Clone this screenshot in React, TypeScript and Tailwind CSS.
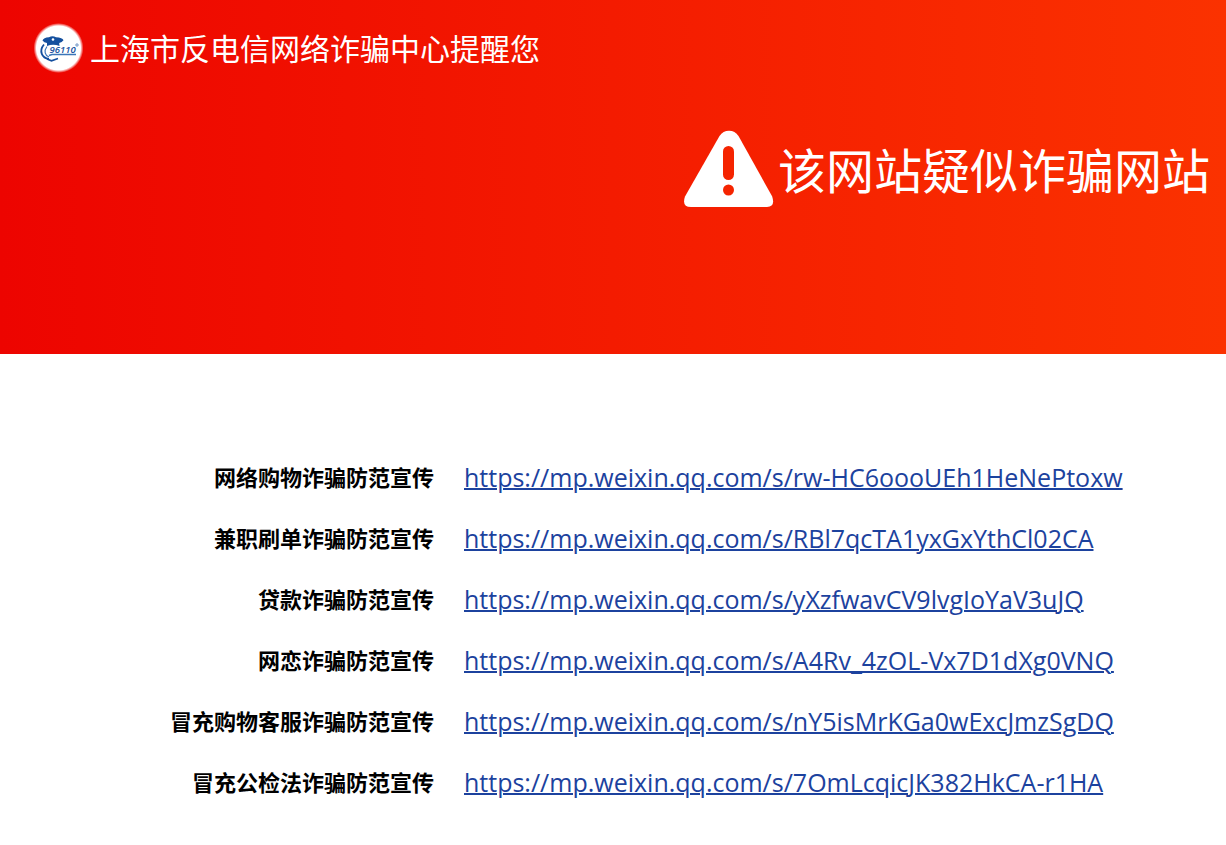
const links = [
  { label: "网络购物诈骗防范宣传", url: "https://mp.weixin.qq.com/s/rw-HC6oooUEh1HeNePtoxw" },
  { label: "兼职刷单诈骗防范宣传", url: "https://mp.weixin.qq.com/s/RBl7qcTA1yxGxYthCl02CA" },
  { label: "贷款诈骗防范宣传", url: "https://mp.weixin.qq.com/s/yXzfwavCV9lvgIoYaV3uJQ" },
  { label: "网恋诈骗防范宣传", url: "https://mp.weixin.qq.com/s/A4Rv_4zOL-Vx7D1dXg0VNQ" },
  { label: "冒充购物客服诈骗防范宣传", url: "https://mp.weixin.qq.com/s/nY5isMrKGa0wExcJmzSgDQ" },
  { label: "冒充公检法诈骗防范宣传", url: "https://mp.weixin.qq.com/s/7OmLcqicJK382HkCA-r1HA" },
];

function Logo() {
  return (
    <svg width="54" height="54" viewBox="0 0 54 54" className="shrink-0" aria-hidden="true">
      <defs>
        <radialGradient id="halo">
          <stop offset="0.88" stopColor="#fff" />
          <stop offset="1" stopColor="#fff" stopOpacity="0" />
        </radialGradient>
      </defs>
      <circle cx="26.500" cy="27" r="25" fill="url(#halo)" />
      {/* police cap */}
      <path
        d="M10.500 19.500 Q11.500 16.500 17 16.200 Q20.500 14.200 24 16.200 Q30.500 16.500 31.500 19.300 Q30 21.500 27.200 22 L27.500 25 Q21 22.500 15 25 L15 22 Q12 21.500 10.500 19.500Z"
        fill="#144f9e"
      />
      <circle cx="21" cy="18.500" r="1.300" fill="#fff" />
      {/* headset ring */}
      <path d="M12 23.500 C6.500 30 10 37 17 38" fill="none" stroke="#144f9e" strokeWidth="1.800" />
      <path d="M15 25.500 C11.500 30 13 34.500 17 36" fill="none" stroke="#3b75b8" strokeWidth="1.200" />
      <path d="M15 38 L19.500 39.800 L26 37.500" fill="none" stroke="#144f9e" strokeWidth="1.600" />
      <text x="17.500" y="31.500" fontSize="9.500" fontStyle="italic" fontFamily="Open Sans, sans-serif" fontWeight="600" fill="#144f9e">
        96110
      </text>
      <circle cx="45" cy="24" r="1.200" fill="none" stroke="#144f9e" strokeWidth="0.600" />
      <path d="M17 34.500 L20 33.500 H44" fill="none" stroke="#3b75b8" strokeWidth="1.600" />
    </svg>
  );
}

function WarningIcon() {
  return (
    <svg width="90" height="78" viewBox="0 0 90 78" className="shrink-0" aria-hidden="true">
      <path
        d="M35.500 6 Q39 0.800 45 0.800 Q51 0.800 54.500 6 L88.200 66.500 Q91.500 77 83 77 H7 Q-2.500 77 1 66.500Z"
        fill="#fff"
      />
      <rect x="39" y="16" width="11" height="34" rx="5.500" fill="#f52400" />
      <circle cx="44.500" cy="60" r="5.500" fill="#f52400" />
    </svg>
  );
}

export default function App() {
  return (
    <div className="min-h-screen bg-white font-['Open_Sans','Noto_Sans_CJK_SC',sans-serif]">
      {/* HEADER */}
      <header className="h-[354px] bg-linear-to-r/srgb from-[#ed0400] to-[#fb3200] text-white">
        <div className="flex h-24 items-center gap-1 pl-8">
          <Logo />
          <p className="pb-0.5 font-['Noto_Sans_CJK_SC',sans-serif] text-[30px] leading-10">上海市反电信网络诈骗中心提醒您</p>
        </div>
        <div className="mt-[34px] flex items-center justify-end gap-1 pr-4">
          <WarningIcon />
          <h1 className="pb-0.5 font-['Noto_Sans_CJK_SC',sans-serif] text-5xl">该网站疑似诈骗网站</h1>
        </div>
      </header>

      {/* LINKS */}
      <main className="pt-[93px]">
        <table className="w-full">
          <tbody>
            {links.map((item) => (
              <tr key={item.url} className="h-[61px]">
                <th scope="row" className="w-[464px] pr-[30px] text-right text-[22px] font-bold whitespace-nowrap text-black">
                  {item.label}
                </th>
                <td className="text-[25px]">
                  <a href={item.url} className="text-[#1c429e] underline decoration-2">
                    {item.url}
                  </a>
                </td>
              </tr>
            ))}
          </tbody>
        </table>
      </main>
    </div>
  );
}
